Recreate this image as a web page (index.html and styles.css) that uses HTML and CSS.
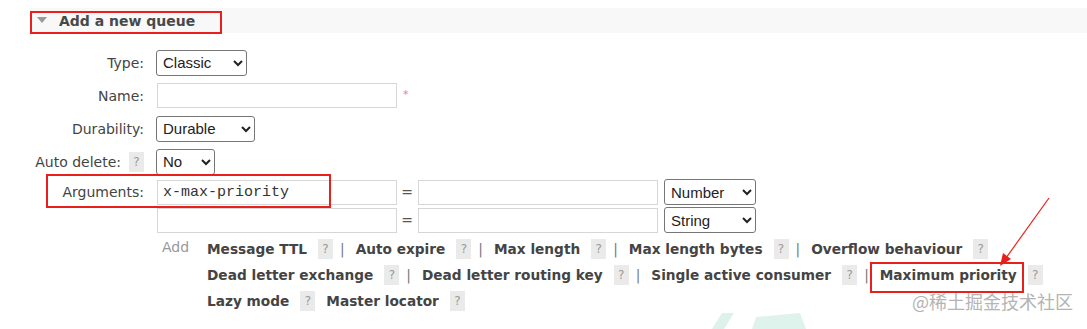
FILE: index.html
```html
<!DOCTYPE html>
<html lang="en">
<head>
    <meta charset="UTF-8">
    <title>Add a new queue</title>
    <link rel="stylesheet" href="styles.css">
</head>
<body>
    <div class="section">
        <h2 class="section-title"><span class="arrow"></span>Add a new queue</h2>

        <form class="queue-form">
            <div class="form-row">
                <label class="label">Type:</label>
                <select class="sel sel-type">
                    <option>Classic</option>
                </select>
            </div>
            <div class="form-row">
                <label class="label">Name:</label>
                <input type="text" class="txt">
                <span class="mandatory">*</span>
            </div>
            <div class="form-row">
                <label class="label">Durability:</label>
                <select class="sel sel-durable">
                    <option>Durable</option>
                </select>
            </div>
            <div class="form-row">
                <label class="label">Auto delete: <span class="help">?</span></label>
                <select class="sel sel-auto">
                    <option>No</option>
                </select>
            </div>
            <div class="form-row arg-row">
                <label class="label">Arguments:</label>
                <input type="text" class="txt mono" value="x-max-priority">
                <span class="eq">=</span>
                <input type="text" class="txt">
                <select class="sel sel-kind">
                    <option>Number</option>
                </select>
            </div>
            <div class="form-row arg-row">
                <span class="label"></span>
                <input type="text" class="txt">
                <span class="eq">=</span>
                <input type="text" class="txt">
                <select class="sel sel-kind">
                    <option>String</option>
                </select>
            </div>

            <div class="add-links">
                <span class="add-word">Add</span>
                <div class="link-lines">
                    <div class="link-line">
                        <span class="arg-link">Message TTL</span><span class="help">?</span><span class="sep">|</span>
                        <span class="arg-link">Auto expire</span><span class="help">?</span><span class="sep">|</span>
                        <span class="arg-link">Max length</span><span class="help">?</span><span class="sep">|</span>
                        <span class="arg-link">Max length bytes</span><span class="help">?</span><span class="sep">|</span>
                        <span class="arg-link">Overflow behaviour</span><span class="help">?</span>
                    </div>
                    <div class="link-line">
                        <span class="arg-link">Dead letter exchange</span><span class="help">?</span><span class="sep">|</span>
                        <span class="arg-link">Dead letter routing key</span><span class="help">?</span><span class="sep">|</span>
                        <span class="arg-link">Single active consumer</span><span class="help">?</span><span class="sep">|</span>
                        <span class="arg-link">Maximum priority</span><span class="help">?</span>
                    </div>
                    <div class="link-line">
                        <span class="arg-link">Lazy mode</span><span class="help spaced">?</span>
                        <span class="arg-link">Master locator</span><span class="help">?</span>
                    </div>
                </div>
            </div>
        </form>
    </div>

    <!-- Markierungen -->
    <div class="mark mark-title"></div>
    <div class="mark mark-args"></div>
    <div class="mark mark-prio"></div>
    <svg class="pointer" width="60" height="80" viewBox="0 0 60 80">
        <line x1="55" y1="2" x2="12" y2="62" stroke="#e8201c" stroke-width="1.2"/>
        <polygon points="6,70 9,57 17,63" fill="#e8201c"/>
    </svg>
    <svg class="logo-bit" width="110" height="16" viewBox="0 0 110 16">
        <polygon points="12,16 22,0 34,0 24,16" fill="#dcf2eb"/>
        <polygon points="52,16 56,4 100,0 106,16" fill="#dff3ed"/>
    </svg>
    <div class="watermark">@稀土掘金技术社区</div>
</body>
</html>
```

FILE: styles.css
```css
body {
    margin: 0;
    background-color: #fff;
    font-family: "DejaVu Sans", Verdana, sans-serif;
    color: #444;
    position: relative;
    width: 1087px;
    height: 329px;
    overflow: hidden;
}

.section {
    padding-top: 8px;
}

.section-title {
    margin: 0 0 0 30px;
    height: 25px;
    background-color: #f8f8f8;
    font-size: 14px;
    font-weight: bold;
    color: #484848;
    display: flex;
    align-items: center;
}

.arrow {
    width: 0;
    height: 0;
    border-left: 5px solid transparent;
    border-right: 5px solid transparent;
    border-top: 6px solid #999;
    margin: 0 12px 2px 7px;
}

.queue-form {
    padding-top: 13px;
}

.form-row {
    display: flex;
    align-items: center;
    height: 33px;
    font-size: 14px;
}

.arg-row {
    height: 28px;
}

.label {
    width: 144px;
    text-align: right;
    margin-right: 12px;
    display: flex;
    justify-content: flex-end;
    align-items: center;
}

.label .help {
    margin-left: 8px;
}

.sel {
    height: 26px;
    font-family: "Liberation Sans", Arial, sans-serif;
    font-size: 15px;
    color: #222;
    border: 1px solid #767676;
    border-radius: 3px;
    background-color: #fff;
    padding: 0 2px;
}

.sel-type { width: 91px; }
.sel-durable { width: 99px; }
.sel-auto { width: 59px; }
.sel-kind { width: 92px; margin-left: 6px; }

.txt {
    width: 240px;
    height: 25px;
    box-sizing: border-box;
    border: 1px solid #d6d6d6;
    padding: 0 5px;
    margin: 0 0 0 1px;
}

.mono {
    font-family: "Liberation Mono", "Courier New", monospace;
    font-size: 15px;
    color: #333;
}

.mandatory {
    color: #f08080;
    font-size: 11px;
    margin-left: 6px;
    margin-bottom: 3px;
}

.eq {
    width: 20px;
    text-align: center;
    color: #555;
}

.help {
    display: inline-block;
    width: 15px;
    height: 20px;
    line-height: 20px;
    text-align: center;
    background-color: #eaeaea;
    color: #999;
    font-size: 12px;
    font-weight: normal;
}

.add-links {
    display: flex;
    margin-top: 2px;
    padding-left: 162px;
    font-size: 13.7px;
}

.add-word {
    color: #999;
    width: 45px;
    line-height: 22px;
    font-size: 14px;
}

.link-line {
    height: 26px;
    display: flex;
    align-items: center;
}

.arg-link {
    font-weight: bold;
    color: #444;
    margin-right: 11px;
}

.help.spaced {
    margin-right: 11px;
}

.sep {
    color: #777;
    margin: 0 11px 0 7px;
}

/* Markierungen über dem Inhalt */
.mark {
    position: absolute;
    border: 2px solid #e8201c;
    box-sizing: border-box;
}

.mark-title {
    left: 30px;
    top: 11px;
    width: 192px;
    height: 23px;
}

.mark-args {
    left: 46px;
    top: 174px;
    width: 285px;
    height: 34px;
}

.mark-prio {
    left: 870px;
    top: 262px;
    width: 154px;
    height: 31px;
}

.pointer {
    position: absolute;
    left: 994px;
    top: 196px;
}

.logo-bit {
    position: absolute;
    left: 700px;
    top: 313px;
}

.watermark {
    position: absolute;
    left: 912px;
    top: 288px;
    font-family: "Noto Sans CJK SC", sans-serif;
    font-size: 18px;
    color: #b4b4b4;
}
```
